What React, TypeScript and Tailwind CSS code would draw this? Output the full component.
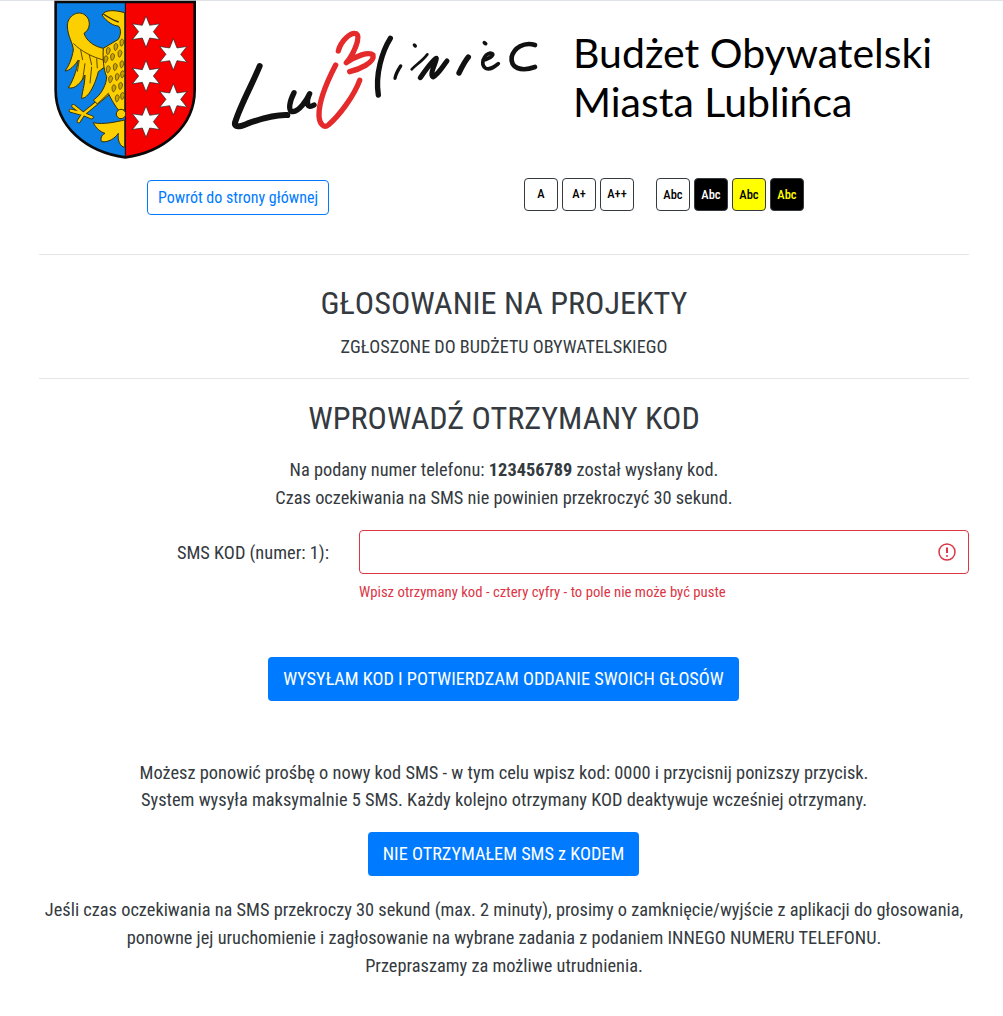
const starPoints = (cx: number, cy: number) => {
  const pts: string[] = [];
  for (let i = 0; i < 12; i++) {
    const r = i % 2 === 0 ? 47 : 22;
    const a = (Math.PI / 6) * i - Math.PI / 2;
    pts.push(`${cx + r * Math.cos(a)},${cy + r * Math.sin(a)}`);
  }
  return pts.join(" ");
};

const scales = [
  [205, 150], [228, 138], [246, 125], [198, 175], [218, 168], [240, 158], [205, 205], [226, 198], [246, 190],
  [212, 235], [232, 228], [248, 220], [222, 262], [242, 255], [232, 292], [248, 285],
];

function Crest() {
  return (
    <svg width="170" height="165" viewBox="0 0 510 495" className="shrink-0">
      <path d="M47 6H256V472C140 457 47 380 47 270Z" fill="#0a80e6" />
      <path d="M256 6H464V270C464 380 370 457 256 472Z" fill="#f60000" />
      <path d="M47 6H464V270C464 380 370 457 256 472C140 457 47 380 47 270Z" fill="none" stroke="#0a0a0a" strokeWidth="8" />
      <path d="M256 6V470" stroke="#0a0a0a" strokeWidth="3" />
      {[[318, 95], [400, 163], [318, 228], [400, 298], [318, 365]].map(([x, y]) => (
        <polygon key={y} points={starPoints(x, y)} fill="#fff" stroke="#222" strokeWidth="2" />
      ))}
      <path d="M205 280L130 342M130 342L92 332M130 342L100 318M130 342L116 364M130 342L155 352" fill="none" stroke="#3a2c00" strokeWidth="12" strokeLinecap="round" />
      <path d="M205 280L130 342M130 342L92 332M130 342L100 318M130 342L116 364M130 342L155 352" fill="none" stroke="#fccf00" strokeWidth="7" strokeLinecap="round" />
      <g fill="#fccf00" stroke="#3a2c00" strokeWidth="3" strokeLinejoin="round">
        <path d="M190 145C165 140 140 125 132 100C150 90 155 60 135 45C115 30 85 45 82 75C82 110 100 130 100 150C95 180 85 200 75 213C90 212 105 195 115 180C110 215 95 250 85 263C105 270 125 245 135 225C135 255 125 280 125 295C145 295 165 255 175 215L195 200Z" />
        <path d="M186 45C195 28 225 30 254 38V330H235C220 310 210 290 205 280L172 312L160 300C185 285 200 250 200 230C190 210 188 170 190 145L235 118C245 100 242 85 235 78C220 78 200 65 186 45Z" />
        <circle cx="243" cy="342" r="14" />
        <path d="M254 360C230 365 190 375 160 368C168 385 180 395 195 400C185 405 180 415 185 425C205 428 225 415 235 400C232 420 240 440 254 442Z" />
      </g>
      <path d="M190 42C205 52 222 62 236 66" fill="none" stroke="#3a2c00" strokeWidth="4" />
      <g fill="#c9a400" stroke="#3a2c00" strokeWidth="2">
        {scales.map(([x, y]) => (
          <path key={`${x}-${y}`} d={`M${x - 6} ${y}C${x - 6} ${y + 16} ${x} ${y + 20} ${x + 6} ${y}C${x + 4} ${y - 10} ${x - 4} ${y - 10} ${x - 6} ${y}Z`} />
        ))}
      </g>
      <g fill="none" stroke="#3a2c00" strokeWidth="2.5">
        <path d="M100 130C125 155 155 170 190 180M122 150L128 180M148 165L155 195M170 175L172 205M118 180L112 215M135 190L128 240M155 200L150 250" />
      </g>
    </svg>
  );
}

function CityLogo() {
  return (
    <svg width="330" height="120" viewBox="0 0 990 360" className="shrink-0" fill="none" strokeLinecap="round" strokeLinejoin="round">
      <g stroke="#111">
        <path d="M122 135C100 190 65 250 48 305C45 320 62 318 85 308C120 295 165 280 205 282" strokeWidth="18" />
        <path d="M225 215C212 240 205 272 222 272C240 270 262 240 272 218C262 240 262 266 285 252" strokeWidth="16" />
        <path d="M514 52C490 90 468 160 478 222" strokeWidth="16" />
        <path d="M545 135C535 150 530 160 528 172" strokeWidth="10" />
        <path d="M586 72L589 75" strokeWidth="10" />
        <path d="M625 100C610 120 590 132 578 145" strokeWidth="8" />
        <path d="M604 170C618 150 640 118 652 112C652 125 630 160 642 168C658 160 672 135 684 120" strokeWidth="15" />
        <path d="M720 156C730 135 740 118 748 108" strokeWidth="16" />
        <path d="M796 65L800 68" strokeWidth="11" />
        <path d="M792 118C815 112 832 98 814 96C795 100 782 130 800 142C815 148 828 136 838 128" strokeWidth="11" />
        <path d="M948 72C915 62 885 80 878 108C874 140 905 154 948 138" strokeWidth="14" />
      </g>
      <path d="M358 90C365 60 395 32 412 38C428 48 400 105 382 125C410 105 450 90 462 102C468 125 420 145 392 152M350 132C325 180 298 240 300 285C302 310 315 322 328 312C360 285 405 225 422 178" stroke="#e42a2a" strokeWidth="16" />
    </svg>
  );
}

const sizeButtons = ["A", "A+", "A++"];
const contrastButtons = [
  "bg-white text-black",
  "bg-black text-white",
  "bg-[#ffff00] text-black",
  "bg-black text-[#ffff00]",
];

function SmallButton({ label, className }: { label: string; className: string }) {
  return (
    <button
      type="button"
      className={`h-[33px] w-[34px] rounded border border-[#343a40] text-[12.5px] font-medium ${className}`}
    >
      {label}
    </button>
  );
}

export default function App() {
  return (
    <div className="min-h-[1016px] border-t border-[#dee2e6] bg-white pl-[39px] pr-[34px] text-center font-['Roboto_Condensed','Roboto',sans-serif] text-[#343a40] [font-stretch:75%]">
      <header className="flex h-[254px] flex-col border-b border-[#e5e5e5]">
        <div className="flex h-[163px] items-start">
          <div className="-mt-px ml-px">
            <Crest />
          </div>
          <div className="ml-[9px] mt-[20px]">
            <CityLogo />
          </div>
          <h1 className="ml-[24px] mt-[27px] text-left font-['Lato',sans-serif] text-[41px] leading-[49px] text-black [font-stretch:100%]">
            Budżet Obywatelski
            <br />
            Miasta Lublińca
          </h1>
        </div>
        <div className="flex items-start">
          <a className="ml-[108px] mt-[16px] flex h-[35px] w-[182px] items-center justify-center rounded border border-[#007bff] text-[16px] text-[#007bff]">
            Powrót do strony głównej
          </a>
          <div className="ml-[195px] mt-[14px] flex gap-1">
            {sizeButtons.map((label) => (
              <SmallButton key={label} label={label} className="bg-white text-black" />
            ))}
          </div>
          <div className="ml-[22px] mt-[14px] flex gap-1">
            {contrastButtons.map((className) => (
              <SmallButton key={className} label="Abc" className={`pt-px ${className}`} />
            ))}
          </div>
        </div>
      </header>

      <section className="flex h-[124px] flex-col items-center border-b border-[#e5e5e5]">
        <h2 className="mt-[28px] text-[32.2px] leading-[40px]">GŁOSOWANIE NA PROJEKTY</h2>
        <p className="mt-[12px] text-[18.2px] leading-[24px]">ZGŁOSZONE DO BUDŻETU OBYWATELSKIEGO</p>
      </section>

      <h2 className="mt-[19px] text-[32.2px] leading-[40px]">WPROWADŹ OTRZYMANY KOD</h2>
      <p className="mt-[18px] text-[18.35px] leading-[28px]">
        Na podany numer telefonu: <b>123456789</b> został wysłany kod.
        <br />
        Czas oczekiwania na SMS nie powinien przekroczyć 30 sekund.
      </p>

      <div className="mt-[18px] flex items-start">
        <label className="w-[290px] pt-[9px] text-right text-[18.4px] leading-[28px]">SMS KOD (numer: 1):</label>
        <div className="ml-[30px] flex-1 text-left">
          <div className="flex h-[44px] items-center justify-end rounded border border-[#dc3545] pr-[12px]">
            <svg width="18" height="18" viewBox="0 0 18 18" fill="none" stroke="#dc3545" strokeWidth="1.5">
              <circle cx="9" cy="9" r="8" />
              <path d="M9 4.5V10" strokeWidth="2" />
              <circle cx="9" cy="13" r="1" fill="#dc3545" stroke="none" />
            </svg>
          </div>
          <p className="mt-[7px] text-[14.75px] leading-[22px] text-[#dc3545]">
            Wpisz otrzymany kod - cztery cyfry - to pole nie może być puste
          </p>
        </div>
      </div>

      <button type="button" className="mr-px mt-[54px] h-[44px] w-[471px] rounded bg-[#007bff] text-[18.25px] text-white">
        WYSYŁAM KOD I POTWIERDZAM ODDANIE SWOICH GŁOSÓW
      </button>

      <p className="mt-[58px] text-[18.4px] leading-[27px]">
        Możesz ponowić prośbę o nowy kod SMS - w tym celu wpisz kod: 0000 i przycisnij ponizszy przycisk.
        <br />
        System wysyła maksymalnie 5 SMS. Każdy kolejno otrzymany KOD deaktywuje wcześniej otrzymany.
      </p>

      <button type="button" className="mr-px mt-[19px] h-[44px] w-[271px] rounded bg-[#007bff] text-[18.25px] text-white">
        NIE OTRZYMAŁEM SMS z KODEM
      </button>

      <p className="mt-[20px] text-[18.35px] leading-[28px]">
        Jeśli czas oczekiwania na SMS przekroczy 30 sekund (max. 2 minuty), prosimy o zamknięcie/wyjście z aplikacji do głosowania,
        <br />
        ponowne jej uruchomienie i zagłosowanie na wybrane zadania z podaniem INNEGO NUMERU TELEFONU.
        <br />
        Przepraszamy za możliwe utrudnienia.
      </p>
    </div>
  );
}
